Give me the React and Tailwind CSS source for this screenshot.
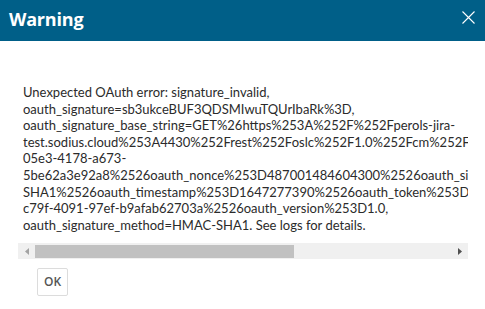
import React from "react";

const lines = [
  "Unexpected OAuth error: signature_invalid,",
  "oauth_signature=sb3ukceBUF3QDSMIwuTQUrIbaRk%3D,",
  "oauth_signature_base_string=GET%26https%253A%252F%252Fperols-jira-",
  "test.sodius.cloud%253A4430%252Frest%252Foslc%252F1.0%252Fcm%252Fcatalog%252Fproject%2526oauth_consumer_key%253Dd7b5a1f2-",
  "05e3-4178-a673-",
  "5be62a3e92a8%2526oauth_nonce%253D487001484604300%2526oauth_signature_method%253DHMAC-",
  "SHA1%2526oauth_timestamp%253D1647277390%2526oauth_token%253Dd3a8e6f1-",
  "c79f-4091-97ef-b9afab62703a%2526oauth_version%253D1.0,",
  "oauth_signature_method=HMAC-SHA1. See logs for details.",
];

export default function App() {
  return (
    <div
      className="w-[485px] h-[309px] bg-white flex flex-col overflow-hidden"
      style={{ fontFamily: '"Open Sans", "Noto Sans", sans-serif' }}
    >
      <div className="h-[41px] shrink-0 bg-[#005f88] flex items-start justify-between pl-[9px] pr-[10px] pt-[7px]">
        <span className="text-white font-bold text-[18px] leading-[24px] tracking-[-0.2px]">Warning</span>
        <svg width="13" height="13" viewBox="0 0 13 13" className="block mt-[4px]">
          <path d="M0.5 0.5 L12.5 12.5 M12.5 0.5 L0.5 12.5" stroke="white" strokeWidth="1.1" fill="none" />
        </svg>
      </div>
      <div className="flex flex-col px-[18px] pt-[43px]">
        <div className="w-[450px] overflow-hidden">
          <div
            className="pl-[5px] text-[13px] leading-[16.6px] text-[#2b2b2b]"
            style={{ fontFamily: 'Lato, "Open Sans", sans-serif' }}
          >
            {lines.map((l, i) => (
              <div key={i} className="whitespace-nowrap">{l}</div>
            ))}
          </div>
        </div>
        <div className="mt-[10px] w-[450px] h-[16px] bg-[#f0f0f0] flex items-center">
          <div className="w-[17px] h-full flex items-center justify-center">
            <svg width="4" height="7" viewBox="0 0 4 7"><path d="M4 0 L0 3.5 L4 7 Z" fill="#a3a3a3" /></svg>
          </div>
          <div className="w-[259px] h-[13px] bg-[#c1c1c1]" />
          <div className="flex-1" />
          <div className="w-[17px] h-full flex items-center justify-center">
            <svg width="4" height="7" viewBox="0 0 4 7"><path d="M0 0 L4 3.5 L0 7 Z" fill="#505050" /></svg>
          </div>
        </div>
        <div className="pl-[19px] pt-[9px]">
          <button className="w-[31px] h-[28px] border border-[#dcdcdc] rounded-[2px] bg-white text-[12px] font-semibold text-[#555] flex items-center justify-center">
            OK
          </button>
        </div>
      </div>
    </div>
  );
}
